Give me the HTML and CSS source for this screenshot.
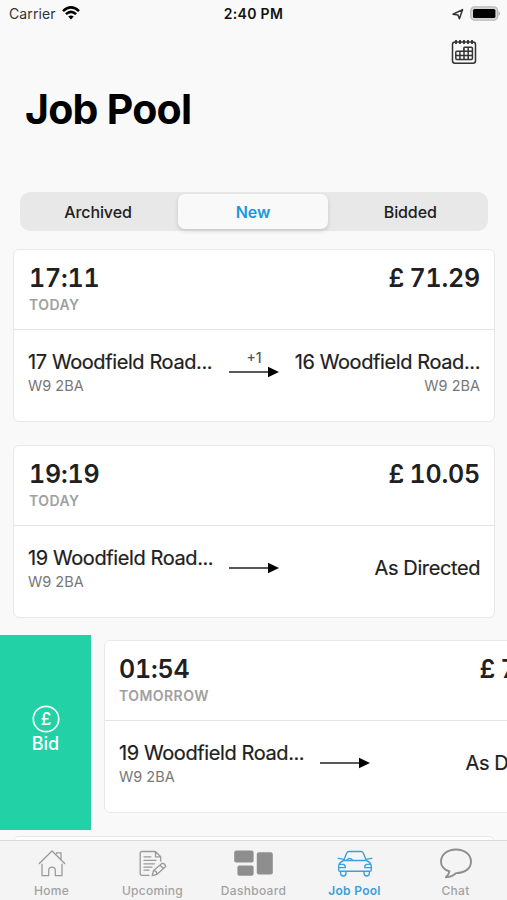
FILE: index.html
```html
<!DOCTYPE html>
<html lang="en">
<head>
<meta charset="utf-8">
<title>Job Pool</title>
<link rel="stylesheet" href="styles.css">
</head>
<body>
<div class="screen">
  <div class="status">
    <div class="carrier"><span>Carrier</span>
      <svg width="18" height="14" viewBox="0 0 18 14" fill="none" stroke="#000" stroke-width="2.5"><path d="M1 5.1Q9-2.3 17 5.1M3.9 8.2Q9 3.5 14.1 8.2"/><path d="M6.2 10.6Q9 8.2 11.8 10.6L9 13.6Z" fill="#000" stroke="none"/></svg>
    </div>
    <div class="clock">2:40 PM</div>
    <div class="power">
      <svg width="12" height="12" viewBox="0 0 12 12" fill="none" stroke="#333" stroke-width="1.5" stroke-linejoin="round"><path d="M1 6.2 10.6 1.6 7.4 10.8 6 7Z"/></svg>
      <svg width="31" height="15" viewBox="0 0 31 15"><rect x=".8" y=".8" width="26.8" height="13.4" rx="3.8" fill="#d5d5d5" stroke="#bbb" stroke-width="1.3"/><rect x="3" y="3" width="22.4" height="9" rx="1.6"/><path d="M28.5 5q3 2.5 0 5Z" fill="#aaa"/></svg>
    </div>
  </div>
  <header class="header">
    <svg class="calendar" width="26" height="26" viewBox="0 0 26 26" fill="none" stroke="#333" stroke-width="1.5"><rect x="1.5" y="3" width="23" height="21.3" rx="2.5"/><path d="M5 1v4M9 1v4M13 1v4M17 1v4M21 1v4" stroke-width="1.8"/><path d="M4.8 13.2q0-1 1-1h7V9.3q0-1 1-1h6.6q1 0 1 1v10.3q0 1-1 1H5.8q-1 0-1-1ZM4.8 16.4h16.6M8.9 12.2v8.4M13 8.3v12.3M17.2 8.3v12.3M13 12.2h8.4"/></svg>
    <h1>Job Pool</h1>
  </header>
  <nav class="segments">
    <span class="segment">Archived</span><span class="segment selected">New</span><span class="segment last">Bidded</span>
  </nav>
  <main class="jobs">
    <div class="row">
      <article class="card">
        <div class="top"><div><div class="time">17:11</div><div class="day">TODAY</div></div><div class="price">£ 71.29</div></div>
        <div class="route">
          <div class="place"><div class="address">17 Woodfield Road...</div><div class="postcode">W9 2BA</div></div>
          <div class="via"><span>+1</span><svg width="50" height="12" viewBox="0 0 50 12"><path d="M0 6h40" stroke="#222" stroke-width="1.5"/><path d="M39 .8 50 6 39 11.2Z"/></svg></div>
          <div class="place end"><div class="address">16 Woodfield Road...</div><div class="postcode">W9 2BA</div></div>
        </div>
      </article>
    </div>
    <div class="row">
      <article class="card">
        <div class="top"><div><div class="time">19:19</div><div class="day">TODAY</div></div><div class="price">£ 10.05</div></div>
        <div class="route">
          <div class="place"><div class="address">19 Woodfield Road...</div><div class="postcode">W9 2BA</div></div>
          <div class="via"><svg width="50" height="12" viewBox="0 0 50 12"><path d="M0 6h40" stroke="#222" stroke-width="1.5"/><path d="M39 .8 50 6 39 11.2Z"/></svg></div>
          <div class="place end directed"><div class="address">As Directed</div></div>
        </div>
      </article>
    </div>
    <div class="row swiped">
      <div class="bid">
        <svg width="28" height="28" viewBox="0 0 28 28"><circle cx="14" cy="14" r="12.7" fill="none" stroke="#fff" stroke-width="1.7"/><text x="14" y="20.2" text-anchor="middle" class="pound">£</text></svg>
        <span>Bid</span>
      </div>
      <article class="card">
        <div class="top"><div><div class="time">01:54</div><div class="day">TOMORROW</div></div><div class="price">£ 71.29</div></div>
        <div class="route">
          <div class="place"><div class="address">19 Woodfield Road...</div><div class="postcode">W9 2BA</div></div>
          <div class="via"><svg width="50" height="12" viewBox="0 0 50 12"><path d="M0 6h40" stroke="#222" stroke-width="1.5"/><path d="M39 .8 50 6 39 11.2Z"/></svg></div>
          <div class="place end directed"><div class="address">As Directed</div></div>
        </div>
      </article>
    </div>
    <div class="row"><article class="card"></article></div>
  </main>
  <nav class="tabs">
    <a class="tab"><svg width="36" height="32" viewBox="0 0 36 32" fill="none" stroke="#999" stroke-width="1.25" stroke-linejoin="round" stroke-linecap="round"><path d="M5.3 16.5 18 4 30.7 16.5M22.5 6.5V5.8H27v6.6M8 17v11.5h6.7v-5.2a3.3 3.3 0 0 1 6.6 0v5.2H28V17"/></svg><span>Home</span></a>
    <a class="tab"><svg width="36" height="32" viewBox="0 0 36 32" fill="none" stroke="#999" stroke-width="1.3" stroke-linejoin="round" stroke-linecap="round"><path d="M14 28.3H6.7a1.5 1.5 0 0 1-1.5-1.5V6a1.5 1.5 0 0 1 1.5-1.5h13.8l5.2 5.2V14M20.5 4.8v5.1h5M9 9.8h7M9 13.3h12M9 16.8h10.5M9 20.2h8M9 23.2h5"/><path d="m17.2 28.7 1.3-5.2 8.4-7q2.8-.6 3.8 2.9l-8.6 7.9ZM18.7 23.3q2.7.5 3.4 3.7M25 18.2l3.6 3.2"/></svg><span>Upcoming</span></a>
    <a class="tab"><svg width="40" height="32" viewBox="0 0 40 32" fill="#8e8e8e"><rect x=".2" y="3.6" width="19.4" height="11.8" rx="2"/><rect x="3.4" y="18.4" width="16.2" height="10.4" rx="2"/><rect x="22.8" y="5.2" width="16" height="22.2" rx="2"/></svg><span>Dashboard</span></a>
    <a class="tab active"><svg width="36" height="32" viewBox="0 0 36 32" fill="none" stroke="#3a9fdc" stroke-width="1.35" stroke-linejoin="round" stroke-linecap="round"><path d="m6.7 13.5 3-7.4Q10.3 4.5 12 4.5h12q1.7 0 2.3 1.6l3 7.4M6.7 13.5h22.6q5 2 5 6v3.5q0 1.2-1.3 1.2H3q-1.3 0-1.3-1.2V19.5q0-4 5-6ZM1.2 11.3l4.8.8M34.8 11.3l-4.8.8M10 13q2.4-3.2 5.4 0M2.2 17.3h4.4q2 .8 1.6 3.3H1.8M33.8 17.3h-4.4q-2 .8-1.6 3.3h6.4M3.6 24.3v2a2.7 2.7 0 0 0 5.4 0v-2M27 24.3v2a2.7 2.7 0 0 0 5.4 0v-2"/></svg><span>Job Pool</span></a>
    <a class="tab"><svg width="36" height="32" viewBox="0 0 36 32" fill="none" stroke="#8e8e8e" stroke-width="1.9" stroke-linejoin="round"><path d="M11.5 24.4C6 22.6 3 19.2 3 14.7 3 7.4 9.8 2.5 18 2.5s15 4.9 15 12.2-6.8 11.4-15 11.4Q14.3 30 7.9 30.3q2.9-2.6 3.6-5.9Z"/></svg><span>Chat</span></a>
  </nav>
</div>
</body>
</html>
```
FILE: styles.css
```css
* { box-sizing: border-box; }
body { margin: 0; font-family: Inter, "Liberation Sans", sans-serif; background: #f9f9f9; color: #202020; }
.screen { width: 507px; height: 900px; overflow: hidden; display: flex; flex-direction: column; background: #f9f9f9; }
.status { height: 28px; flex: none; display: grid; grid-template-columns: 1fr auto 1fr; align-items: center; padding: 0 6px 0 9px; font-size: 14px; line-height: 28px; }
.carrier, .power { display: flex; align-items: center; gap: 6px; }
.carrier { color: #333; letter-spacing: .1px; }
.carrier svg { margin-top: -2px; }
.clock { font-weight: 600; color: #111; letter-spacing: .3px; margin: 0 3px 0 0; }
.power { justify-content: flex-end; }
.power svg { margin-top: -1px; }
.header { height: 164px; flex: none; display: flex; flex-direction: column; padding: 11px 30px 0 25px; }
.calendar { align-self: flex-end; }
h1 { margin: 18px 0 0; font-size: 41px; line-height: 52px; font-weight: 700; letter-spacing: -.75px; color: #000; }
.segments { flex: none; height: 39px; margin: 0 19.5px 0 20px; padding: 2px; border-radius: 10px; background: #e8e8e8; display: grid; grid-template-columns: 156px 150px 1fr; }
.segment { display: flex; align-items: center; justify-content: center; font-size: 16px; font-weight: 500; letter-spacing: -.1px; padding-right: 4px; }
.last { padding: 0 0 0 7px; }
.selected { padding: 0; color: #1b98da; font-weight: 600; background: #f9f9f9; border-radius: 7px; box-shadow: 0 2px 4px #00000026; }
.jobs { flex: 1; min-height: 0; overflow: hidden; padding-top: 13px; }
.row { height: 195.5px; padding: 5px 0 0 13px; display: flex; align-items: flex-start; }
.card { flex: none; width: 482px; height: 173px; background: #fff; border: 1.5px solid #e8e8e8; border-radius: 6px; }
.top { height: 80px; padding: 13px 14px 0 15px; display: flex; justify-content: space-between; border-bottom: 1px solid #e4e4e4; }
.time, .price { font-size: 25px; line-height: 31px; font-weight: 600; letter-spacing: -.2px; font-variant-numeric: tabular-nums; }
.price { word-spacing: -1px; }
.day { font-size: 14px; line-height: 17px; margin-top: 2px; font-weight: 600; color: #a0a0a0; letter-spacing: .45px; }
.route { height: 90px; padding: 19px 14px 0 14px; display: grid; grid-template-columns: 186px 50px 186px; column-gap: 15px; }
.place { white-space: nowrap; }
.end { text-align: right; }
.address { font-size: 20px; line-height: 26px; letter-spacing: -.4px; -webkit-text-stroke: .2px #202020; }
.postcode { font-size: 14.5px; line-height: 20px; margin-top: 1px; color: #777; }
.directed { padding-top: 10px; }
.via { height: 29px; display: flex; flex-direction: column; align-items: center; justify-content: flex-end; font-size: 14px; line-height: 16px; color: #555; font-weight: 500; }
.swiped { padding: 0; }
.swiped .card { margin: 5px 0 0 13px; }
.swiped .top { padding-left: 14px; }
.bid { flex: none; width: 91px; height: 195px; background: #22d1a6; color: #fff; display: flex; flex-direction: column; align-items: center; justify-content: center; padding-bottom: 6px; font-size: 18px; line-height: 22px; font-weight: 500; }
.pound { fill: #fff; font-size: 17px; font-weight: 500; }
.tabs { flex: none; height: 60px; border-top: 1px solid #dadada; background: #f4f4f4; display: grid; grid-template-columns: repeat(5, 101px); padding-left: 1px; }
.tab { display: flex; flex-direction: column; align-items: center; padding-top: 6px; font-size: 12px; line-height: 16px; font-weight: 500; color: #a2a2a2; letter-spacing: .3px; }
.tab span { margin-top: 4px; }
.active { color: #3a9fdc; font-weight: 600; }
```
